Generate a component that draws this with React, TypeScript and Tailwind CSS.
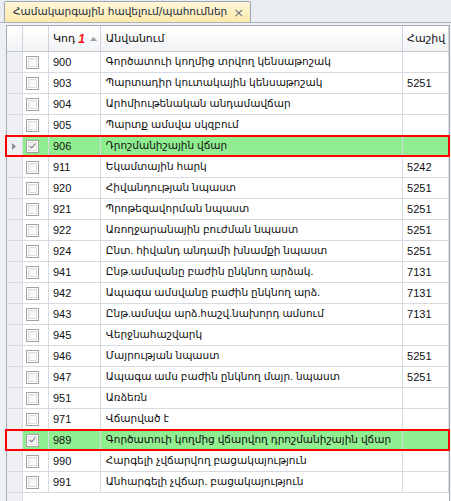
import React from 'react';

type Row = { code: string; name: string; account?: string; checked?: boolean };

const ROWS: Row[] = [
  { code: '900', name: 'Գործատուի կողմից տրվող կենսաթոշակ' },
  { code: '903', name: 'Պարտադիր կուտակային կենսաթոշակ', account: '5251' },
  { code: '904', name: 'Արհմիութենական անդամավճար' },
  { code: '905', name: 'Պարտք ամսվա սկզբում' },
  { code: '906', name: 'Դրոշմանիշային վճար', checked: true },
  { code: '911', name: 'Եկամտային հարկ', account: '5242' },
  { code: '920', name: 'Հիվանդության նպաստ', account: '5251' },
  { code: '921', name: 'Պրոթեզավորման նպաստ', account: '5251' },
  { code: '922', name: 'Առողջարանային բուժման նպաստ', account: '5251' },
  { code: '924', name: 'Ընտ. հիվանդ անդամի խնամքի նպաստ', account: '5251' },
  { code: '941', name: 'Ընթ.ամսվանը բաժին ընկնող արձակ.', account: '7131' },
  { code: '942', name: 'Ապագա ամսվանը բաժին ընկնող արձ.', account: '7131' },
  { code: '943', name: 'Ընթ.ամսվա արձ.հաշվ.նախորդ ամսում', account: '7131' },
  { code: '945', name: 'Վերջնահաշվարկ' },
  { code: '946', name: 'Մայրության նպաստ', account: '5251' },
  { code: '947', name: 'Ապագա ամս բաժին ընկնող մայր. նպաստ', account: '5251' },
  { code: '951', name: 'Առձեռն' },
  { code: '971', name: 'Վճարված է' },
  { code: '989', name: 'Գործատուի կողմից վճարվող դրոշմանիշային վճար', checked: true },
  { code: '990', name: 'Հարգելի չվճարվող բացակայություն' },
  { code: '991', name: 'Անհարգելի չվճար. բացակայություն' },
];

const CheckBox = ({ checked }: { checked?: boolean }) => (
  <div className="w-[13px] h-[13px] border border-[#a2a2a2] bg-white p-px">
    <div className="w-full h-full border border-[#dcdcdc] bg-gradient-to-br from-[#f2f2f2] to-white flex items-center justify-center">
      {checked && (
        <svg width="9" height="8" viewBox="0 0 9 8">
          <path d="M1 4 L3.5 6.5 L8 1" fill="none" stroke="#7a7a7a" strokeWidth="1.4" />
        </svg>
      )}
    </div>
  </div>
);

export default function App() {
  return (
    <div className="w-[451px] h-[501px] overflow-hidden bg-[#e9edf2] text-[10.5px] text-[#101010] font-['Liberation_Sans','DejaVu_Sans',sans-serif]">
      {/* tab strip */}
      <div className="h-[22px] flex items-end pl-[4px]">
        <div className="h-[21px] flex items-center gap-[6px] pl-[8px] pr-[6px] border border-b-0 border-[#9da6b2] rounded-t-[2px] bg-gradient-to-b from-[#fff7d9] to-[#fde9a9] text-[10.5px] text-[#1c2b45] whitespace-nowrap font-['DejaVu_Sans',sans-serif]">
          <span>Համակարգային հավելում/պահումներ</span>
          <span className="text-[#6b7584] text-[13px] leading-none">×</span>
        </div>
      </div>

      {/* panel */}
      <div className="h-[479px] border-t border-[#a8b1bd] bg-[#eef1f4] pl-[6px] pt-[2px]">
        <div className="w-[444px] h-[478px] border border-[#a5adb8] bg-white flex flex-col">
          {/* header */}
          <div className="h-[26px] flex border-b border-[#c3c8cf] bg-gradient-to-b from-white to-[#f1f3f6] shrink-0">
            <div className="w-[16px] border-r border-[#d0d4da]" />
            <div className="w-[26px] border-r border-[#d0d4da]" />
            <div className="w-[52px] border-r border-[#d0d4da] flex items-center pl-[4px] text-[11px]">
              <span>Կոդ</span>
              <span className="ml-[3px] text-[#ff1010] font-bold italic text-[12px]">1</span>
              <svg className="ml-[5px]" width="7" height="4" viewBox="0 0 7 4">
                <path d="M0 4 L3.5 0 L7 4 Z" fill="#9aa0a8" />
              </svg>
            </div>
            <div className="w-[303px] border-r border-[#d0d4da] flex items-center pl-[5px] text-[11px]">Անվանում</div>
            <div className="w-[46px] border-r border-[#d0d4da] flex items-center pl-[4px] text-[11px]">Հաշիվ</div>
          </div>

          {/* rows */}
          <div className="flex-1 flex flex-col">
            {ROWS.map((r) => (
              <div key={r.code} className="relative h-[21px] flex border-b border-[#d7dae0] shrink-0">
                <div className="w-[16px] border-r border-[#d7dae0] bg-[#eef0f3] flex items-center justify-center">
                  {r.code === '906' && (
                    <svg width="4" height="7" viewBox="0 0 4 7">
                      <path d="M0 0 L4 3.5 L0 7 Z" fill="#8a8f96" />
                    </svg>
                  )}
                </div>
                <div className={`w-[26px] border-r border-[#d7dae0] flex items-center pl-[3px] ${r.checked ? 'bg-[#90ee90]' : ''}`}>
                  <CheckBox checked={r.checked} />
                </div>
                <div className={`w-[52px] border-r border-[#d7dae0] flex items-center pl-[4px] text-[11px] ${r.checked ? 'bg-[#90ee90]' : ''}`}>
                  {r.code}
                </div>
                <div className={`w-[303px] border-r border-[#d7dae0] flex items-center pl-[5px] whitespace-nowrap overflow-hidden ${r.checked ? 'bg-[#90ee90]' : ''}`}>
                  {r.name}
                </div>
                <div className={`w-[46px] border-r border-[#d7dae0] flex items-center pl-[4px] text-[11px] ${r.checked ? 'bg-[#90ee90]' : ''}`}>
                  {r.account}
                </div>
                {r.checked && (
                  <div className="absolute left-[-2px] right-[-1px] top-[-1px] bottom-[-1px] border-2 border-[#ff0000] pointer-events-none" />
                )}
              </div>
            ))}
            <div className="flex-1 flex">
              <div className="w-[16px] border-r border-[#d7dae0] bg-[#eef0f3]" />
            </div>
          </div>
        </div>
      </div>
    </div>
  );
}
